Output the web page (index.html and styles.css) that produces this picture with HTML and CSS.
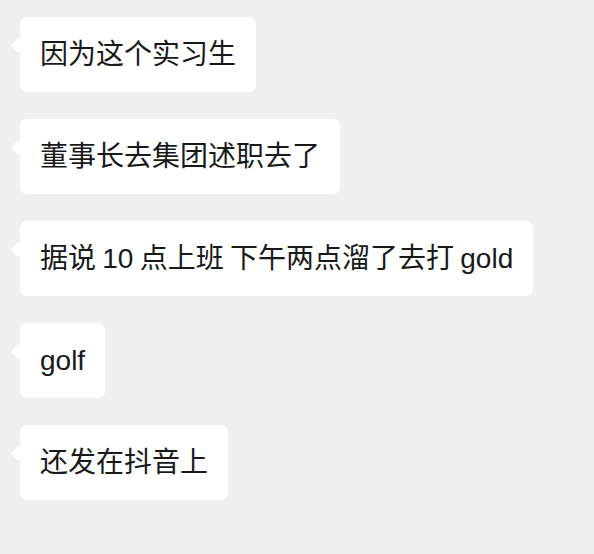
FILE: index.html
```html
<!DOCTYPE html>
<html lang="zh">
<head>
<meta charset="utf-8">
<link rel="stylesheet" href="styles.css">
</head>
<body>
<div class="chat">
  <div class="bubble">因为这个实习生</div>
  <div class="bubble">董事长去集团述职去了</div>
  <div class="bubble bubble-mixed">据说 10 点上班 下午两点溜了去打 gold</div>
  <div class="bubble">golf</div>
  <div class="bubble">还发在抖音上</div>
</div>
</body>
</html>
```
FILE: styles.css
```css
html, body {
  margin: 0;
  padding: 0;
  background: #f0f0f0;
}
.chat {
  display: flex;
  flex-direction: column;
  align-items: flex-start;
  gap: 27px;
  padding: 17px 0 0 20px;
}
.bubble {
  position: relative;
  background: #ffffff;
  border-radius: 7px;
  padding: 0 20px;
  height: 75px;
  line-height: 75px;
  font-family: "Liberation Sans", "Noto Sans CJK SC", sans-serif;
  font-size: 28px;
  color: #191919;
  white-space: nowrap;
}
.bubble-mixed {
  word-spacing: -1.5px;
}
.bubble::before {
  content: "";
  position: absolute;
  left: -2px;
  top: 23px;
  width: 11px;
  height: 11px;
  background: #ffffff;
  border-radius: 2px;
  transform: rotate(45deg);
  transform-origin: center;
  margin-left: -5px;
}
```
